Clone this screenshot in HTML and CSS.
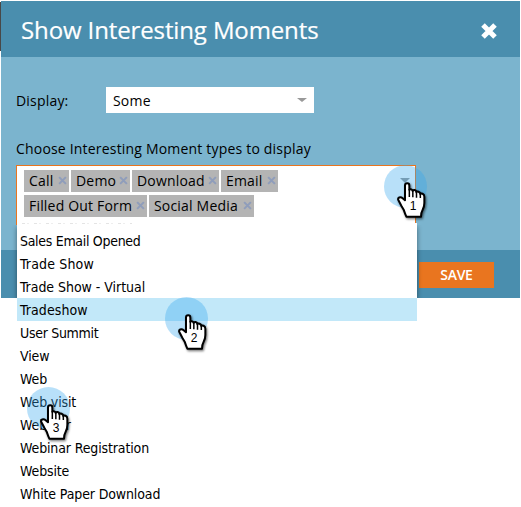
FILE: index.html
```html
<!DOCTYPE html>
<html lang="en">
<head>
<meta charset="utf-8">
<title>Show Interesting Moments</title>
<link rel="stylesheet" href="styles.css">
</head>
<body>
<svg width="0" height="0" class="defs">
  <symbol id="hand" viewBox="0 0 156 174">
    <circle class="halo" cx="64.500" cy="64.500" r="64.500"/>
    <path class="hand" d="M69.500 55C66 55 63 58 63 62V106L55 99C49 94 40 98 43 105L52 122L59 134C62 143 64 149 67 155H111C111 147 112 141 116 134C120 127 121 121 121 114V95C121 86 111 83 109 88C109 80 99 77 97 82C97 74 87 73 86 78C86 73 79 72 76 74V62C76 58 73 55 69.500 55Z"/>
    <path class="finger" d="M76 72V96M86.500 78V97M97.500 82V98M109 88V99"/>
  </symbol>
  <symbol id="x" viewBox="0 0 8 8"><path d="M1 1L7 7M7 1L1 7"/></symbol>
</svg>
<main class="dialog">
  <header class="head">
    <h1>Show Interesting Moments</h1>
    <svg class="close"><use href="#x"/></svg>
  </header>
  <section class="body">
    <div class="field">
      <label>Display:</label>
      <div class="select"><span>Some</span><i class="arrow"></i></div>
    </div>
    <label class="types">Choose Interesting Moment types to display</label>
    <div class="combo">
      <div class="tags">
        <span class="tag call">Call<svg><use href="#x"/></svg></span>
        <span class="tag demo">Demo<svg><use href="#x"/></svg></span>
        <span class="tag download">Download<svg><use href="#x"/></svg></span>
        <span class="tag email">Email<svg><use href="#x"/></svg></span>
        <span class="tag form">Filled Out Form<svg><use href="#x"/></svg></span>
        <span class="tag social">Social Media<svg><use href="#x"/></svg></span>
      </div>
      <i class="arrow"></i>
    </div>
  </section>
  <footer class="foot"><button>SAVE</button></footer>
</main>
<ul class="menu">
  <li class="tight">Sales Email Opened</li>
  <li class="loose">Trade Show</li>
  <li class="even">Trade Show - Virtual</li>
  <li class="active">Tradeshow</li>
  <li class="tight">User Summit</li>
  <li>View</li>
  <li>Web</li>
  <li>Web visit</li>
  <li>Webinar</li>
  <li>Webinar Registration</li>
  <li>Website</li>
  <li>White Paper Download</li>
</ul>
<div class="pointer one"><svg><use href="#hand"/></svg><b>1</b></div>
<div class="pointer two"><svg><use href="#hand"/></svg><b>2</b></div>
<div class="pointer three"><svg><use href="#hand"/></svg><b>3</b></div>
</body>
</html>
```
FILE: styles.css
```css
* { box-sizing: border-box; }
body {
  margin: 0;
  height: 507px;
  position: relative;
  overflow: hidden;
  background: linear-gradient(#484848, #484848) 0 2px / 1px 49px no-repeat #fff;
  font-family: "Open Sans", sans-serif;
  color: #000;
}
.defs { position: absolute; }
.dialog {
  width: 519px;
  height: 298px;
  margin-left: 1px;
  padding-top: 1px;
  display: flex;
  flex-direction: column;
}
.head {
  height: 56px;
  padding: 1px 23px 0 20px;
  display: flex;
  align-items: center;
  justify-content: space-between;
  background: #4a8eae;
  color: #fff;
}
h1 { margin: 0; font-size: 24px; font-weight: 400; letter-spacing: -.12px; white-space: nowrap; -webkit-text-stroke: .2px #fff; }
.close { width: 16px; height: 16px; margin-top: 3px; fill: none; stroke: #fff; stroke-width: 2.5; }
.body {
  height: 193px;
  padding: 30px 0 0 15px;
  background: #7bb4ce;
  font-size: 14px;
  letter-spacing: .19px;
  white-space: nowrap;
}
.field { display: flex; align-items: center; }
.field label { width: 90px; }
.select {
  width: 208px;
  height: 26px;
  padding: 1px 7px 0 7px;
  display: flex;
  align-items: center;
  justify-content: space-between;
  background: #fff;
}
.arrow { width: 0; height: 0; border: 5px solid transparent; border-top-color: #999; border-bottom: 0; }
.select .arrow { margin-bottom: 2px; border-top-width: 4px; }
.types { display: block; height: 20px; margin-top: 26px; line-height: 20px; }
.combo {
  width: 400px;
  height: 60px;
  margin-top: 6px;
  padding: 4px 5px 0 7px;
  display: flex;
  justify-content: space-between;
  background: #fff;
  border: 1px solid #e9751f;
  border-bottom: 0;
}
.combo .arrow { margin-top: 8px; }
.tags { width: 262px; display: flex; flex-wrap: wrap; align-content: flex-start; gap: 3px 2px; }
.tag {
  height: 22px;
  padding: 0 2px 0 5px;
  display: flex;
  align-items: center;
  justify-content: space-between;
  background: #b4b4b4;
  line-height: 22px;
}
.tag svg { width: 9px; height: 9px; margin-bottom: 2px; fill: none; stroke: #8f9dbb; stroke-width: 1.8; }
.call { width: 45px; }
.demo { width: 59px; }
.download { width: 87px; }
.email { width: 57px; }
.form { width: 123px; }
.social { width: 105px; }
.foot { height: 48px; padding: 12px 26px 0 0; display: flex; justify-content: flex-end; background: #4a8eae; }
button {
  width: 75px;
  height: 26px;
  padding: 0 0 1px;
  border: 0;
  background: #e9751f;
  color: #fff;
  font: 600 14px "Open Sans", sans-serif;
  letter-spacing: -.3px;
}
.menu {
  position: absolute;
  left: 17px;
  top: 223px;
  width: 400px;
  height: 284px;
  margin: 0;
  padding: 6px 0 0;
  list-style: none;
  background: #fff;
  font: 14px/24px "DejaVu Sans Condensed", "DejaVu Sans", sans-serif;
  letter-spacing: -.13px;
}
.menu::before {
  content: "";
  position: absolute;
  left: 5px;
  top: 0;
  width: 110px;
  height: 1px;
  background: repeating-linear-gradient(90deg, #e4e4e4 0 3px, #fff 3px 5px, #eee 5px 7px, #fff 7px 12px);
}
.menu::after {
  content: "";
  position: absolute;
  left: 0;
  top: 2px;
  width: 400px;
  height: 73px;
  box-shadow: 0 2px 5px rgba(0, 0, 0, .45);
  clip-path: inset(0 -6px 0 -6px);
}
.menu li { height: 23px; padding-left: 3px; }
.menu .tight { letter-spacing: -.3px; }
.menu .loose { letter-spacing: .16px; }
.menu .even { letter-spacing: -.04px; }
.menu .active { background: #c2e8f9; letter-spacing: .1px; }
.pointer { position: absolute; width: 52px; height: 58px; }
.pointer svg { display: block; width: 52px; height: 58px; }
.halo { fill: rgba(53, 165, 239, .35); }
.hand { fill: #fff; stroke: #000; stroke-width: 6; stroke-linejoin: round; filter: drop-shadow(3px 4px 3px rgba(0, 0, 0, .55)); }
.finger { fill: none; stroke: #000; stroke-width: 4.500; }
.pointer b { position: absolute; left: 24px; top: 34px; width: 10px; text-align: center; font: 12px/14px "Liberation Sans", sans-serif; }
.one { left: 384px; top: 165px; }
.two { left: 165px; top: 297px; }
.three { left: 27px; top: 387px; }
```
